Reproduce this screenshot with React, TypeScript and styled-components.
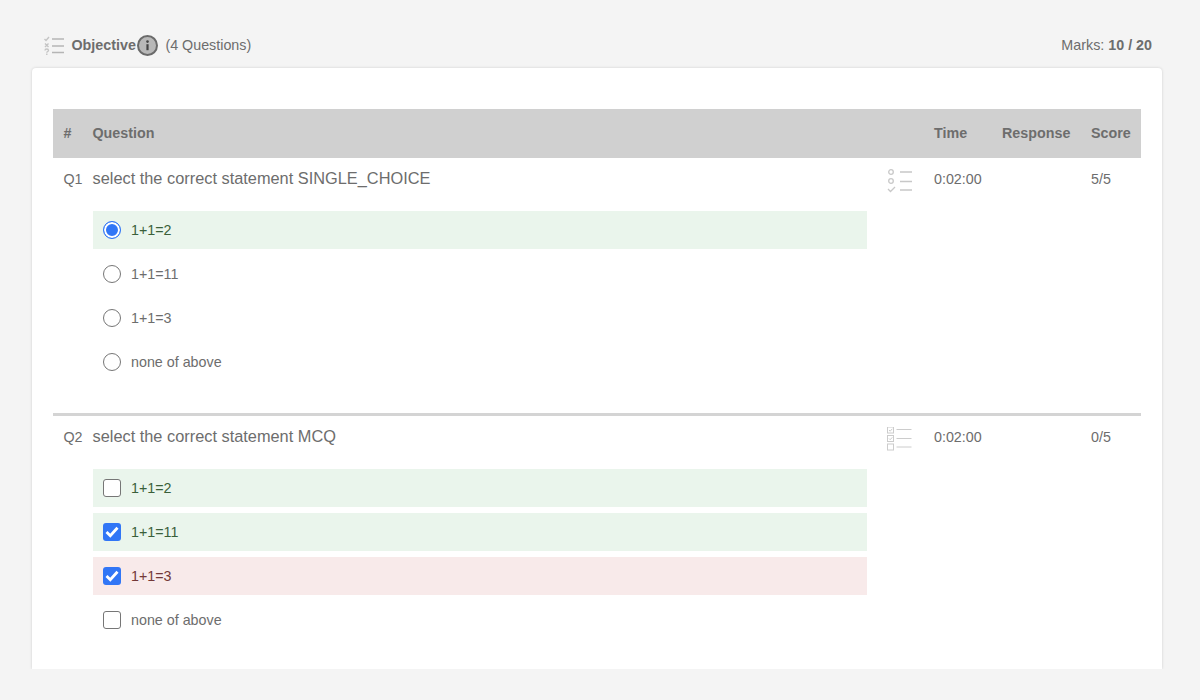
import { createGlobalStyle, styled } from "styled-components";

const GlobalStyle = createGlobalStyle`
  html, body {
    margin: 0;
    height: 100%;
    background: #f4f4f4;
    overflow: hidden;
  }
  body {
    font-family: "Liberation Sans", Arial, sans-serif;
    color: #6d6d6d;
  }
`;

const Page = styled.div`
  height: 700px;
  box-sizing: border-box;
  padding: 30px 38px 31px 32px;
  display: flex;
  flex-direction: column;
`;

const TopBar = styled.div`
  height: 30px;
  margin-bottom: 8px;
  padding: 0 10px 0 12px;
  display: flex;
  align-items: center;
  font-size: 14.3px;
`;

const SectionTitle = styled.span`
  margin-left: 7.5px;
  margin-right: 1.5px;
  font-weight: 700;
`;

const QuestionCount = styled.span`
  margin-left: 7px;
`;

const Marks = styled.span`
  margin-left: auto;
  b {
    margin-left: 4px;
  }
`;

const Card = styled.div`
  flex: 1;
  box-sizing: border-box;
  padding: 41px 21px 0;
  background: #fff;
  box-shadow: 0 0 3px rgba(0, 0, 0, 0.16);
  border-radius: 4px 4px 0 0;
  overflow: hidden;
  clip-path: inset(-4px -4px 0 -4px);
`;

const Row = styled.div<{ $head?: boolean; $divider?: boolean }>`
  display: grid;
  grid-template-columns: 39.5px 793.5px 48px 68px 89px 50px;
  ${(p) => p.$head && "height: 49px; box-sizing: border-box; padding-bottom: 1px; align-items: center; background: #d0d0d0; font-size: 14.3px; font-weight: 700;"}
  ${(p) => p.$divider && "border-bottom: 3px solid #d4d4d4; height: 254.7px;"}
`;

const Num = styled.div`
  padding-left: 10.5px;
  font-size: 14.3px;
  line-height: 43px;
`;

const HeadNum = styled.div`
  padding-left: 10.5px;
`;

const QuestionText = styled.div`
  font-size: 16.35px;
  line-height: 41.7px;
  height: 53px;
`;

const OptionList = styled.div`
  width: 774.5px;
  display: flex;
  flex-direction: column;
  gap: 5.6px;
`;

const Option = styled.div<{ $state?: "right" | "wrong" }>`
  height: 38.4px;
  padding-left: 10px;
  display: flex;
  align-items: center;
  gap: 10px;
  font-size: 14.3px;
  background: ${(p) =>
    p.$state === "right" ? "#eaf5ec" : p.$state === "wrong" ? "#f8eaea" : "transparent"};
  color: ${(p) =>
    p.$state === "right" ? "#3a5f3a" : p.$state === "wrong" ? "#733838" : "#6d6d6d"};
`;

const Radio = styled.span<{ $on?: boolean }>`
  width: 18.5px;
  height: 18.5px;
  box-sizing: border-box;
  border-radius: 50%;
  border: ${(p) => (p.$on ? "1.5px solid #3176f6" : "1.5px solid #767676")};
  background: ${(p) => (p.$on ? "#3176f6" : "#fff")};
  box-shadow: ${(p) => (p.$on ? "inset 0 0 0 2px #fff" : "none")};
`;

const Check = styled.span<{ $on?: boolean }>`
  width: 18.5px;
  height: 18.5px;
  box-sizing: border-box;
  border-radius: 3px;
  border: ${(p) => (p.$on ? "none" : "1.5px solid #767676")};
  background: ${(p) => (p.$on ? "#3176f6" : "#fff")};
  display: flex;
  align-items: center;
  justify-content: center;
`;

const TypeIconCell = styled.div`
  height: 42px;
  padding-top: 11px;
  padding-left: 1px;
  box-sizing: border-box;
`;

const Cell = styled.div`
  font-size: 14.3px;
  line-height: 43px;
`;

const ObjectiveIcon = () => (
  <svg width="20" height="19" viewBox="0 0 20 19" fill="none" stroke="#c4c4c4" strokeWidth="1.4">
    <path d="M0.5 3l1.5 1.5L5 1" />
    <path d="M1 7.5l3.5 3.5M4.5 7.5L1 11" />
    <path d="M1 14.5c0-2 3.5-2 3.5 0 0 1-1.7 1-1.7 2.2M2.8 17.5v1.5" />
    <path d="M8 3h12M8 10h12M8 16.5h12" stroke="#b5b5b5" />
  </svg>
);

const InfoIcon = () => (
  <svg width="21" height="21" viewBox="0 0 21 21">
    <circle cx="10.5" cy="10.5" r="9.5" fill="#b8b8b8" stroke="#6a6a6a" strokeWidth="2" />
    <circle cx="10.5" cy="6.6" r="1.3" fill="#444" />
    <path d="M9.4 9.2h2.2v6h-2.2z" fill="#444" />
  </svg>
);

const SingleChoiceIcon = () => (
  <svg width="26" height="24" viewBox="0 0 26 24" fill="none" stroke="#c8c8c8" strokeWidth="1.3">
    <circle cx="4" cy="3" r="2.3" />
    <circle cx="4" cy="12" r="2.3" />
    <path d="M1 20l2.5 2.5L8 18" />
    <path d="M13 3h12M13 12.5h12M13 21h12" />
  </svg>
);

const MultiChoiceIcon = () => (
  <svg width="26" height="24" viewBox="0 0 26 24" fill="none" stroke="#cccccc" strokeWidth="1">
    <rect x="0.5" y="0" width="6" height="6" />
    <path d="M2 3l1.2 1.2L5.3 1.8" />
    <rect x="0.5" y="8.5" width="6" height="6" />
    <path d="M2 11.5l1.2 1.2 2.1-2.4" />
    <rect x="0.5" y="17" width="6" height="6" />
    <path d="M9.5 2.5h15M9.5 11.5h15M9.5 20h15" />
  </svg>
);

const Tick = () => (
  <svg width="14" height="12" viewBox="0 0 14 12" fill="none" stroke="#fff" strokeWidth="2.8">
    <path d="M1.5 6l3.8 3.8L12.5 1.8" />
  </svg>
);

const singleOptions = ["1+1=2", "1+1=11", "1+1=3", "none of above"];
const multiOptions = [
  { text: "1+1=2", state: "right", on: false },
  { text: "1+1=11", state: "right", on: true },
  { text: "1+1=3", state: "wrong", on: true },
  { text: "none of above", on: false },
] as const;

export default function App() {
  return (
    <>
      <GlobalStyle />
      <Page>
        <TopBar>
          <ObjectiveIcon />
          <SectionTitle>Objective</SectionTitle>
          <InfoIcon />
          <QuestionCount>(4 Questions)</QuestionCount>
          <Marks>
            Marks:<b>10 / 20</b>
          </Marks>
        </TopBar>
        <Card>
          <Row $head>
            <HeadNum>#</HeadNum>
            <div>Question</div>
            <div />
            <div>Time</div>
            <div>Response</div>
            <div>Score</div>
          </Row>
          <Row $divider>
            <Num>Q1</Num>
            <div>
              <QuestionText>select the correct statement SINGLE_CHOICE</QuestionText>
              <OptionList>
                {singleOptions.map((text, i) => (
                  <Option key={text} $state={i === 0 ? "right" : undefined}>
                    <Radio $on={i === 0} />
                    {text}
                  </Option>
                ))}
              </OptionList>
            </div>
            <TypeIconCell>
              <SingleChoiceIcon />
            </TypeIconCell>
            <Cell>0:02:00</Cell>
            <div />
            <Cell>5/5</Cell>
          </Row>
          <Row>
            <Num>Q2</Num>
            <div>
              <QuestionText>select the correct statement MCQ</QuestionText>
              <OptionList>
                {multiOptions.map((o) => (
                  <Option key={o.text} $state={"state" in o ? o.state : undefined}>
                    <Check $on={o.on}>{o.on && <Tick />}</Check>
                    {o.text}
                  </Option>
                ))}
              </OptionList>
            </div>
            <TypeIconCell>
              <MultiChoiceIcon />
            </TypeIconCell>
            <Cell>0:02:00</Cell>
            <div />
            <Cell>0/5</Cell>
          </Row>
        </Card>
      </Page>
    </>
  );
}
